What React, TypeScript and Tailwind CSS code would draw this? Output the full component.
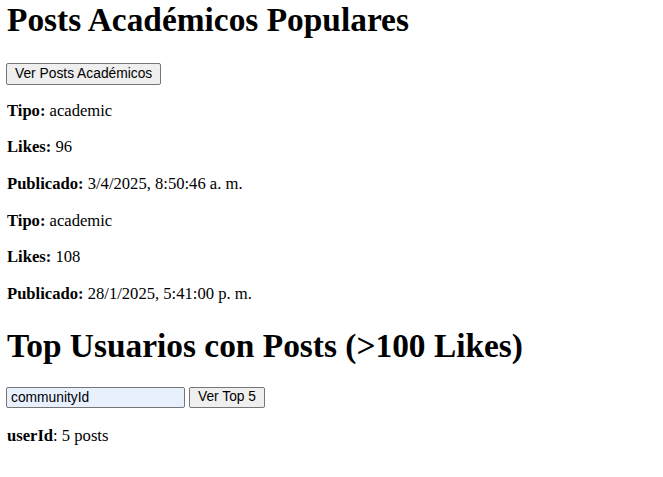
import React, { useState } from "react";

const posts = [
  { tipo: "academic", likes: 96, publicado: "3/4/2025, 8:50:46 a. m." },
  { tipo: "academic", likes: 108, publicado: "28/1/2025, 5:41:00 p. m." },
];

const serif = "font-['Times_New_Roman','Liberation_Serif',serif]";
const sans = "font-['Arial','Liberation_Sans',sans-serif]";

export default function App() {
  const [communityId, setCommunityId] = useState("communityId");

  return (
    <div className={`${serif} text-black bg-white min-h-screen px-[7px] pt-[1px] text-[16.6px]`}>
      {/* Posts académicos */}
      <h1 className="text-[33.4px] font-bold leading-[37px]">Posts Académicos Populares</h1>
      <div className="mt-[23px] -ml-px">
        <button
          className={`${sans} h-[22px] text-[13.8px] leading-[16px] px-[8px] border border-[#767676] rounded-[2px] bg-[#efefef] text-black`}
        >
          Ver Posts Académicos
        </button>
      </div>

      <div className="mt-[16px] flex flex-col gap-[18.6px]">
        {posts.map((p, i) => (
          <React.Fragment key={i}>
            <p className="leading-[18px]">
              <strong>Tipo:</strong> {p.tipo}
            </p>
            <p className="leading-[18px]">
              <strong>Likes:</strong> {p.likes}
            </p>
            <p className="leading-[18px]">
              <strong>Publicado:</strong> {p.publicado}
            </p>
          </React.Fragment>
        ))}
      </div>

      {/* Top usuarios */}
      <h1 className="mt-[24px] text-[33.4px] font-bold leading-[37px]">Top Usuarios con Posts (&gt;100 Likes)</h1>
      <div className="mt-[23px] -ml-px flex items-center gap-[4px]">
        <input
          value={communityId}
          onChange={(e) => setCommunityId(e.target.value)}
          className={`${sans} w-[179px] h-[21px] text-[13.8px] px-[4px] border border-[#767676] rounded-[2px] bg-[#e8f0fe] text-black outline-none`}
        />
        <button
          className={`${sans} h-[21px] text-[13.8px] leading-[16px] px-[8px] border border-[#767676] rounded-[2px] bg-[#efefef] text-black`}
        >
          Ver Top 5
        </button>
      </div>

      <p className="mt-[19px] leading-[18px]">
        <strong>userId</strong>: 5 posts
      </p>
    </div>
  );
}
